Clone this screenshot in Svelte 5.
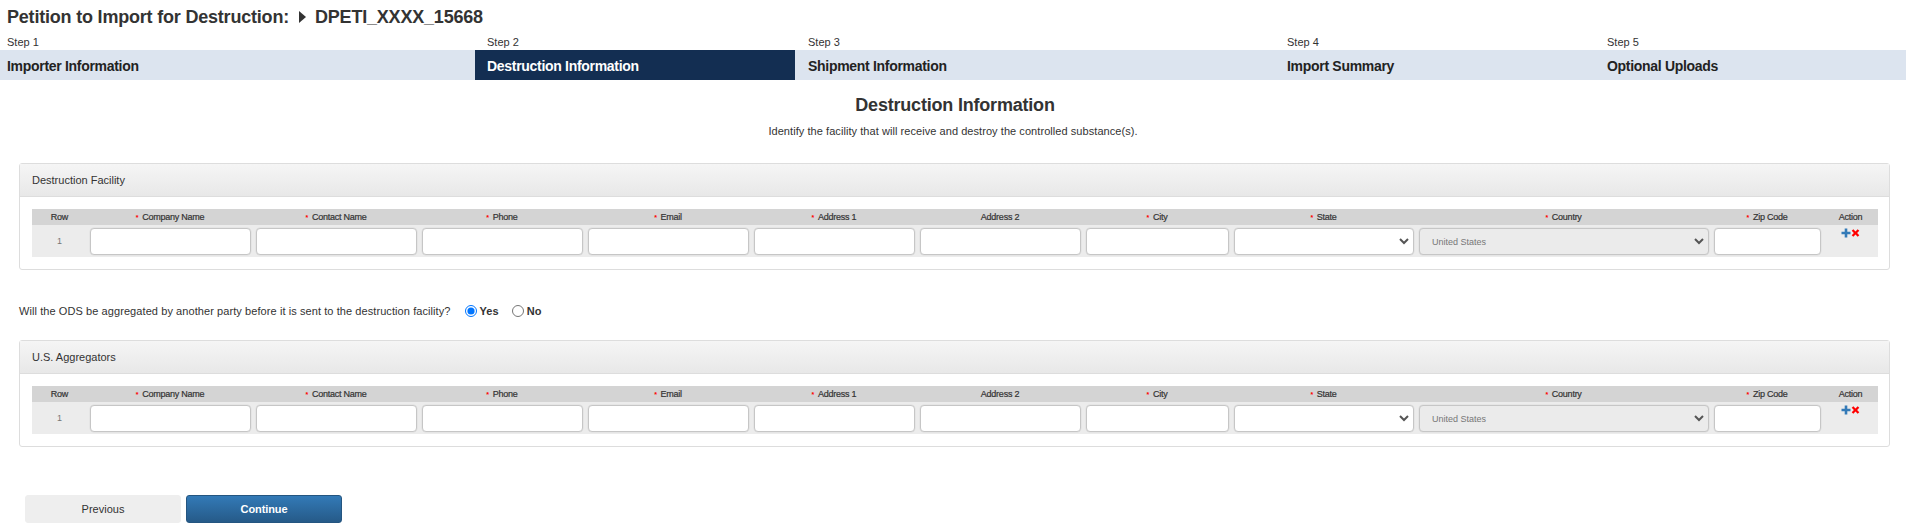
<script>
  const steps = [
    { n: 'Step 1', t: 'Importer Information' },
    { n: 'Step 2', t: 'Destruction Information', active: true },
    { n: 'Step 3', t: 'Shipment Information' },
    { n: 'Step 4', t: 'Import Summary' },
    { n: 'Step 5', t: 'Optional Uploads' }
  ];
  const cols = [
    ['Company Name', true], ['Contact Name', true], ['Phone', true], ['Email', true],
    ['Address 1', true], ['Address 2', false], ['City', true]
  ];
  const panels = ['Destruction Facility', 'U.S. Aggregators'];
</script>

{#snippet panel(title)}
  <section class="panel">
    <div class="panel-head">{title}</div>
    <div class="panel-body">
      <div class="grid head">
        <div>Row</div>
        {#each cols as [label, req]}
          <div>{#if req}<span class="req">*</span>{/if}{label}</div>
        {/each}
        <div><span class="req">*</span>State</div>
        <div><span class="req">*</span>Country</div>
        <div><span class="req">*</span>Zip Code</div>
        <div>Action</div>
      </div>
      <div class="grid row">
        <div class="num">1</div>
        {#each cols as [label]}
          <div class="cell"><input type="text" aria-label={label} /></div>
        {/each}
        <div class="cell"><select aria-label="State"><option></option></select></div>
        <div class="cell"><select aria-label="Country" disabled class="off"><option>United States</option></select></div>
        <div class="cell"><input type="text" aria-label="Zip Code" /></div>
        <div class="actions">
          <svg width="10" height="10" viewBox="0 0 10 10" aria-label="Add"><path d="M3.700 0.500h2.600v3.200h3.200v2.600H6.300v3.200H3.700V6.300H0.500V3.700h3.200z" fill="#337ab7"/></svg>
          <svg width="9" height="10" viewBox="0 0 10 10" aria-label="Remove"><path d="M2.600 0.800 5 3.200 7.400 0.800 9.200 2.600 6.800 5 9.200 7.400 7.400 9.200 5 6.800 2.600 9.200 0.800 7.400 3.200 5 0.800 2.600z" fill="#f00"/></svg>
        </div>
      </div>
    </div>
  </section>
{/snippet}

<main>
  <h1>Petition to Import for Destruction:<svg class="caret" width="7" height="12" viewBox="0 0 7 12"><path d="M0 0l7 6-7 6z" fill="#333"/></svg>DPETI_XXXX_15668</h1>
  <nav class="steps">
    {#each steps as s}
      <div class="step" class:active={s.active}>
        <div class="step-n">{s.n}</div>
        <div class="step-t">{s.t}</div>
      </div>
    {/each}
  </nav>
  <h2>Destruction Information</h2>
  <p class="sub">Identify the facility that will receive and destroy the controlled substance(s).</p>

  {@render panel(panels[0])}

  <div class="question">
    <span>Will the ODS be aggregated by another party before it is sent to the destruction facility?</span>
    <label><input type="radio" name="agg" checked />Yes</label>
    <label><input type="radio" name="agg" />No</label>
  </div>

  {@render panel(panels[1])}

  <div class="buttons">
    <button class="prev">Previous</button>
    <button class="next">Continue</button>
  </div>
</main>

<style>
  :global(body) { margin: 0; background: #fff; }
  main { font-family: "Liberation Sans", Arial, sans-serif; color: #333; width: 1906px; height: 529px; overflow: hidden; }
  h1 { margin: 0; padding: 2px 0 0 7px; height: 31px; box-sizing: border-box; font-size: 18px; line-height: 22px; font-weight: bold; display: flex; align-items: center; letter-spacing: -0.2px; }
  .caret { margin: 0 9px 0 10px; }
  .steps { display: grid; grid-template-columns: 475px 320px 480px 320px 1fr; height: 49px; }
  .step-n { height: 19px; line-height: 22px; font-size: 11px; padding-left: 7px; }
  .step-t { height: 30px; line-height: 32px; background: #dce4ef; font-size: 14px; font-weight: bold; padding-left: 7px; color: #222; letter-spacing: -0.3px; }
  .active .step-n { padding-left: 12px; }
  .active .step-t { background: #132e52; color: #fff; padding-left: 12px; }
  .step:nth-child(3) .step-n, .step:nth-child(3) .step-t { padding-left: 13px; }
  .step:nth-child(4) .step-n, .step:nth-child(4) .step-t,
  .step:nth-child(5) .step-n, .step:nth-child(5) .step-t { padding-left: 12px; }
  h2 { margin: 14px 0 0; padding-left: 4px; font-size: 18px; line-height: 22px; text-align: center; font-weight: bold; letter-spacing: -0.2px; }
  .sub { margin: 7px 0 0; font-size: 11px; line-height: 16px; text-align: center; letter-spacing: 0.06px; }
  .panel { margin: 24px 16px 0 19px; border: 1px solid #ddd; border-radius: 3px; height: 107px; box-sizing: border-box; }
  .panel-head { height: 33px; box-sizing: border-box; line-height: 33px; padding-left: 12px; font-size: 11px; background: linear-gradient(#f5f5f5, #e8e8e8); border-bottom: 1px solid #ddd; }
  .panel-body { padding: 12px 11px 0 12px; }
  .grid { display: grid; grid-template-columns: 55px repeat(6, 166px) 148px 185px 295px 112px 55px; }
  .head { height: 16px; background: #d4d4d4; font-size: 9px; line-height: 16px; font-weight: normal; text-align: center; -webkit-text-stroke: 0.2px #333; letter-spacing: -0.25px; }
  .req { color: #f00; margin-right: 4px; font-size: 7px; -webkit-text-stroke: 0; font-weight: bold; }
  .row { height: 32px; background: #ececec; }
  .num { font-size: 9px; text-align: center; line-height: 32px; color: #777; }
  .cell { padding: 3px 2.5px 2px 3px; box-sizing: border-box; }
  input[type="text"], select { display: block; width: 100%; height: 27px; box-sizing: border-box; border: 1px solid #c6c6c6; border-radius: 4px; background-color: #fff; box-shadow: 0 0 0 0.5px #ddd; font: 9px "Liberation Sans", Arial, sans-serif; color: #777; padding: 0 12px; margin: 0; }
  select {
    appearance: none;
    background-image: url("data:image/svg+xml,%3Csvg xmlns='http://www.w3.org/2000/svg' width='10' height='7' viewBox='0 0 10 7'%3E%3Cpath d='M1 1l4 4 4-4' fill='none' stroke='%23555' stroke-width='2'/%3E%3C/svg%3E");
    background-repeat: no-repeat;
    background-position: right 4px center;
  }
  select.off { background-color: #ebebeb; opacity: 1; }
  .actions { display: flex; justify-content: center; gap: 0; padding-top: 3px; align-items: flex-start; height: 12px; }
  .question { margin: 29px 0 0 19px; height: 24px; display: flex; align-items: center; font-size: 11px; letter-spacing: 0.08px; }
  .question label { display: flex; align-items: center; font-weight: bold; margin-left: 14px; }
  .question label + label { margin-left: 13px; }
  .question input { margin: 0 3px 0 0; width: 12px; height: 12px; }
  .panel ~ .panel { margin-top: 17px; }
  .buttons { display: flex; gap: 5px; padding: 48px 0 0 25px; }
  button { width: 156px; height: 28px; border-radius: 3px; font: 11px "Liberation Sans", Arial, sans-serif; padding: 0; }
  .prev { background: #eee; border: 1px solid #eee; color: #333; }
  .next { background: linear-gradient(#337ab7, #265a88); border: 1px solid #245580; color: #fff; font-weight: bold; letter-spacing: -0.1px; }
</style>
